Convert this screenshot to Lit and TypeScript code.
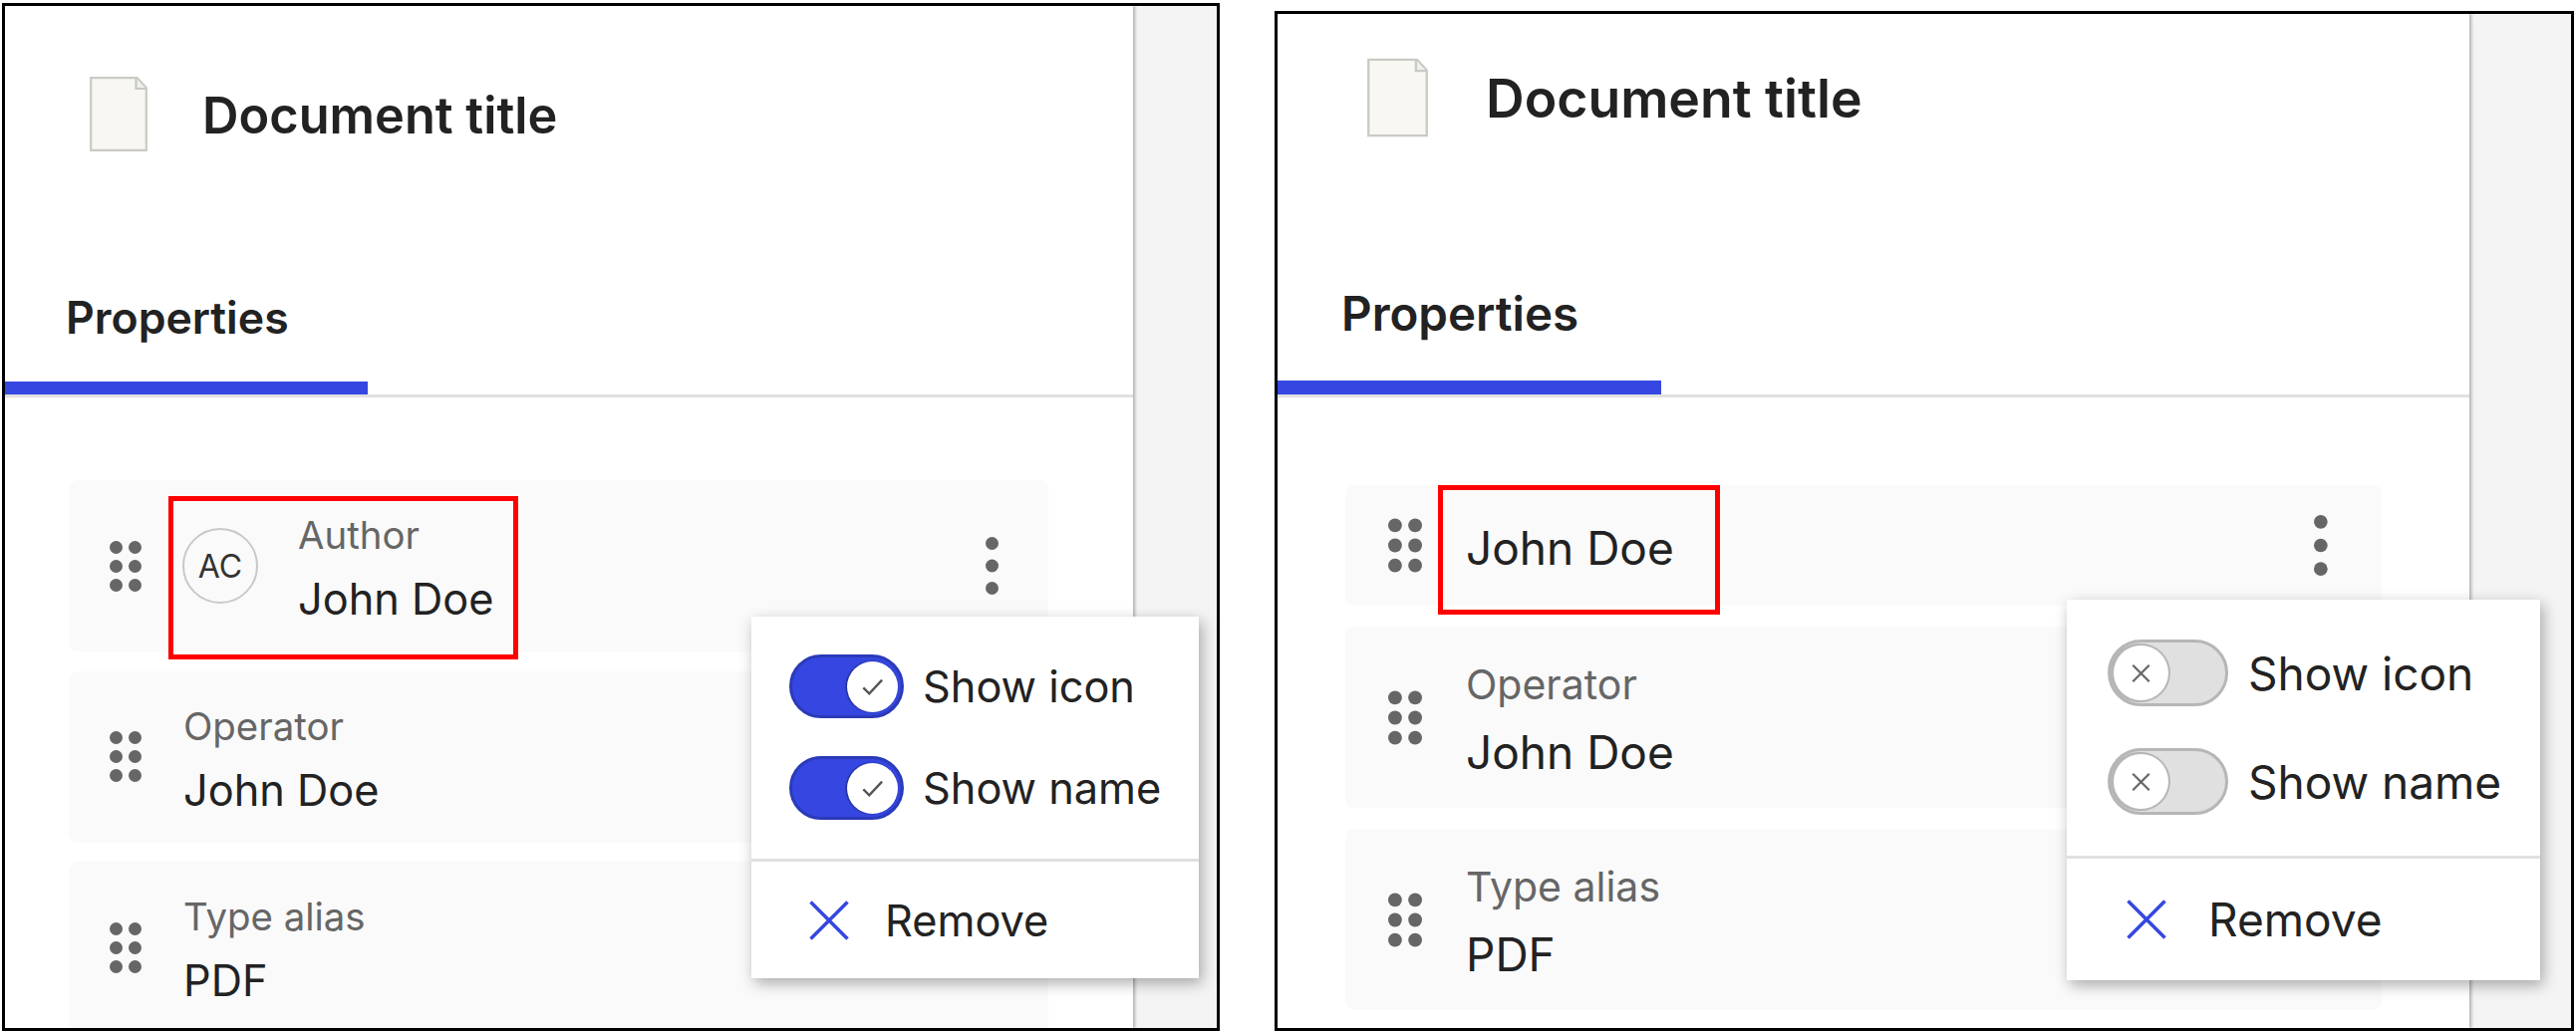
import { LitElement, html, css, svg } from "lit";
import { customElement } from "lit/decorators.js";

const dots = (cols: number[], rows: number[], w: number, h: number, cls: string) => html`<svg class=${cls} viewBox="0 0 ${w} ${h}" aria-hidden="true">
  ${rows.map((y) => cols.map((x) => svg`<circle cx=${x} cy=${y} r="6.5" fill="#666"></circle>`))}
</svg>`;

const grip = () => dots([6.5, 25.5], [6.5, 25.5, 44.5], 32, 51, "grip");
const kebab = () => dots([6.5], [6.5, 29, 51.5], 13, 58, "kebab");

const docIcon = () => html`<svg class="doc" viewBox="0 0 58 75" aria-hidden="true">
  <path d="M1.2 1.2H47.5L56.8 11.2V73.8H1.2Z" fill="#f8f7f2" stroke="#c9c9c5" stroke-width="2.2"></path>
  <path d="M46.5 1.5V12H56.5" fill="#f0f0ea" stroke="#c9c9c5" stroke-width="2.2"></path>
</svg>`;

const toggle = (on: boolean) => html`<span class="track ${on ? "on" : "off"}">
  <span class="knob">
    <svg viewBox="0 0 24 24" aria-hidden="true">
      ${on
        ? svg`<path d="M2 13.5L8.5 20L22.5 5" fill="none" stroke="#555" stroke-width="2.6"></path>`
        : svg`<path d="M3 3L21 21M21 3L3 21" fill="none" stroke="#666" stroke-width="2.4"></path>`}
    </svg>
  </span>
</span>`;

const card = (label: string, value: string, opts: { avatar?: boolean; kebab?: boolean; short?: boolean } = {}) => html`
  <div class="card ${opts.short ? "short" : ""}">
    ${grip()}
    ${opts.avatar ? html`<span class="avatar">AC</span>` : ""}
    <div class="text ${opts.avatar ? "with-avatar" : ""}">
      ${label ? html`<div class="label">${label}</div>` : ""}
      <div class="value">${value}</div>
    </div>
    ${opts.kebab ? kebab() : ""}
  </div>`;

@customElement("app-root")
export class AppRoot extends LitElement {
  static styles = css`
    :host {
      display: block;
      width: 2585px;
      height: 1035px;
      background: #fff;
      overflow: hidden;
      font-family: Inter, "Liberation Sans", sans-serif;
      color: #222;
    }
    .shots {
      display: flex;
      align-items: flex-start;
    }
    .shot {
      box-sizing: border-box;
      position: relative;
      display: flex;
      flex: none;
      border: 3px solid #000;
      overflow: hidden;
    }
    .a {
      margin: 3px 0 0 2px;
      width: 1222px;
      height: 1032px;
      --panel-w: 1132px;
      --header-h: 217px;
      --doc-w: 58px;
      --doc-h: 75px;
      --doc-left: 85px;
      --doc-gap: 55px;
      --title: 50.5px;
      --tabs-h: 176px;
      --tab-w: 364px;
      --tab-pad-l: 61px;
      --tab-pad-b: 34px;
      --tab-size: 44.6px;
      --bar: 13px;
      --list-top: 83px;
      --list-l: 64px;
      --list-r: 85px;
      --gap: 19.5px;
      --card-h: 172px;
      --grip-l: 41px;
      --grip-w: 32px;
      --grip-h: 51px;
      --text-l: 42px;
      --line: 67px;
      --label: 38.4px;
      --value: 43.3px;
      --keb-r: 50px;
      --keb-h: 58px;
      --track-w: 115px;
      --track-h: 64px;
      --knob: 51px;
      --row-gap: 38px;
      --toggle-gap: 19px;
      --remove-gap: 36px;
      --remove-l: 58px;
    }
    .b {
      margin: 11px 0 0 55px;
      width: 1304px;
      height: 1024px;
      --panel-w: 1196px;
      --header-h: 168px;
      --doc-w: 61px;
      --doc-h: 80px;
      --doc-left: 90px;
      --doc-gap: 58px;
      --title: 53.5px;
      --tabs-h: 217px;
      --tab-w: 385px;
      --tab-pad-l: 64px;
      --tab-pad-b: 37px;
      --tab-size: 47.5px;
      --bar: 14px;
      --list-top: 88px;
      --list-l: 68px;
      --list-r: 88px;
      --gap: 21px;
      --card-h: 182px;
      --grip-l: 43px;
      --grip-w: 34px;
      --grip-h: 55px;
      --text-l: 44px;
      --line: 71px;
      --label: 41px;
      --value: 46px;
      --keb-r: 54px;
      --keb-h: 61px;
      --track-w: 121px;
      --track-h: 67px;
      --knob: 55px;
      --row-gap: 42px;
      --toggle-gap: 20px;
      --remove-gap: 42px;
      --remove-l: 60px;
    }
    .panel {
      flex: none;
      width: var(--panel-w);
      background: #fff;
      box-shadow: 2px 0 3px rgba(0, 0, 0, 0.28);
      position: relative;
    }
    .gutter {
      flex: 1;
      background: #f4f4f4;
    }
    .header {
      height: var(--header-h);
      display: flex;
      align-items: center;
      padding-left: var(--doc-left);
      gap: var(--doc-gap);
    }
    .doc {
      width: var(--doc-w);
      height: var(--doc-h);
      flex: none;
    }
    .title {
      padding-top: 3px;
      font-size: var(--title);
      font-weight: 600;
      line-height: 1.2;
      color: #222;
    }
    .tabs {
      box-sizing: border-box;
      height: var(--tabs-h);
      display: flex;
      align-items: flex-end;
      border-bottom: 3px solid #e0e0e0;
    }
    .tab {
      box-sizing: border-box;
      width: var(--tab-w);
      padding: 0 0 var(--tab-pad-b) var(--tab-pad-l);
      border-bottom: var(--bar) solid #3547e0;
      font-size: var(--tab-size);
      font-weight: 600;
      line-height: 60px;
    }
    .list {
      display: flex;
      flex-direction: column;
      gap: var(--gap);
      padding: var(--list-top) var(--list-r) 0 var(--list-l);
    }
    .card {
      flex: none;
      height: var(--card-h);
      background: #fafafa;
      border-radius: 9px;
      display: flex;
      align-items: center;
      padding-left: var(--grip-l);
    }
    .card.short {
      height: 121px;
    }
    .grip {
      width: var(--grip-w);
      height: var(--grip-h);
      flex: none;
    }
    .kebab {
      width: calc(var(--keb-h) * 13 / 58);
      height: var(--keb-h);
      flex: none;
      margin-left: auto;
      margin-right: var(--keb-r);
    }
    .avatar {
      box-sizing: border-box;
      width: 76px;
      height: 76px;
      flex: none;
      margin-left: 41px;
      border: 2px solid #c9c9c9;
      border-radius: 50%;
      display: flex;
      align-items: center;
      justify-content: center;
      font-size: 32px;
      color: #333;
    }
    .text {
      margin-left: var(--text-l);
      padding-top: 6px;
    }
    .text.with-avatar {
      margin-left: 40px;
    }
    .label {
      font-size: var(--label);
      line-height: calc(var(--line) - 6px);
      color: #666;
    }
    .value {
      font-size: var(--value);
      line-height: var(--line);
      color: #222;
    }
    .mark {
      position: absolute;
      box-sizing: border-box;
      border: 5px solid #fe0000;
    }
    .a .mark {
      left: 164px;
      top: 492px;
      width: 351px;
      height: 164px;
    }
    .b .mark {
      left: 161px;
      top: 473px;
      width: 283px;
      height: 130px;
    }
    .popup {
      position: absolute;
      background: #fff;
      box-shadow: 3px 5px 14px rgba(0, 0, 0, 0.32);
      display: flex;
      flex-direction: column;
    }
    .a .popup {
      left: 749px;
      top: 613px;
      width: 449px;
      height: 363px;
    }
    .b .popup {
      left: 792px;
      top: 588px;
      width: 475px;
      height: 382px;
    }
    .toggles {
      box-sizing: border-box;
      display: flex;
      flex-direction: column;
      gap: var(--row-gap);
      border-bottom: 3px solid #e0e0e0;
    }
    .a .toggles {
      height: 246px;
      padding: 38px 0 0 38px;
    }
    .b .toggles {
      height: 260px;
      padding: 40px 0 0 41px;
    }
    .row {
      display: flex;
      align-items: center;
      gap: var(--toggle-gap);
      font-size: var(--value);
      color: #222;
      height: var(--track-h);
    }
    .track {
      box-sizing: border-box;
      width: var(--track-w);
      height: var(--track-h);
      flex: none;
      display: flex;
      align-items: center;
      border-radius: 40px;
      border: 3px solid;
      padding: 0 3px;
    }
    .track.on {
      background: #3547e0;
      border-color: #2b3ab9;
      justify-content: flex-end;
    }
    .track.off {
      background: #e0e0e0;
      border-color: #b6b6b6;
      justify-content: flex-start;
    }
    .knob {
      box-sizing: border-box;
      width: var(--knob);
      height: var(--knob);
      border-radius: 50%;
      background: #fff;
      display: flex;
      align-items: center;
      justify-content: center;
    }
    .on .knob {
      box-shadow: -1px 0 2px rgba(0, 0, 40, 0.55);
    }
    .off .knob {
      box-shadow: 0 0 0 2px #b6b6b6, -2px 0 0 2px #b6b6b6;
    }
    .knob svg {
      width: 25px;
      height: 22px;
    }
    .remove {
      flex: 1;
      display: flex;
      align-items: center;
      padding-left: var(--remove-l);
      gap: var(--remove-gap);
      font-size: var(--value);
      color: #222;
    }
    .remove svg {
      width: 40px;
      height: 40px;
      flex: none;
    }
  `;

  private shot(cls: string, first: unknown) {
    return html`<section class="shot ${cls}">
      <div class="panel">
        <div class="header">${docIcon()}<div class="title">Document title</div></div>
        <div class="tabs"><div class="tab">Properties</div></div>
        <div class="list">
          ${first}
          ${card("Operator", "John Doe")}
          ${card("Type alias", "PDF")}
        </div>
      </div>
      <div class="gutter"></div>
      <div class="mark"></div>
      <div class="popup">
        <div class="toggles">
          <div class="row">${toggle(cls === "a")}<span>Show icon</span></div>
          <div class="row">${toggle(cls === "a")}<span>Show name</span></div>
        </div>
        <div class="remove">
          <svg viewBox="0 0 40 40" aria-hidden="true"><path d="M1.5 1.5L38.5 38.5M38.5 1.5L1.5 38.5" fill="none" stroke="#3547e0" stroke-width="3.5"></path></svg>
          <span>Remove</span>
        </div>
      </div>
    </section>`;
  }

  render() {
    return html`<div class="shots">
      ${this.shot("a", card("Author", "John Doe", { avatar: true, kebab: true }))}
      ${this.shot("b", card("", "John Doe", { kebab: true, short: true }))}
    </div>`;
  }
}
